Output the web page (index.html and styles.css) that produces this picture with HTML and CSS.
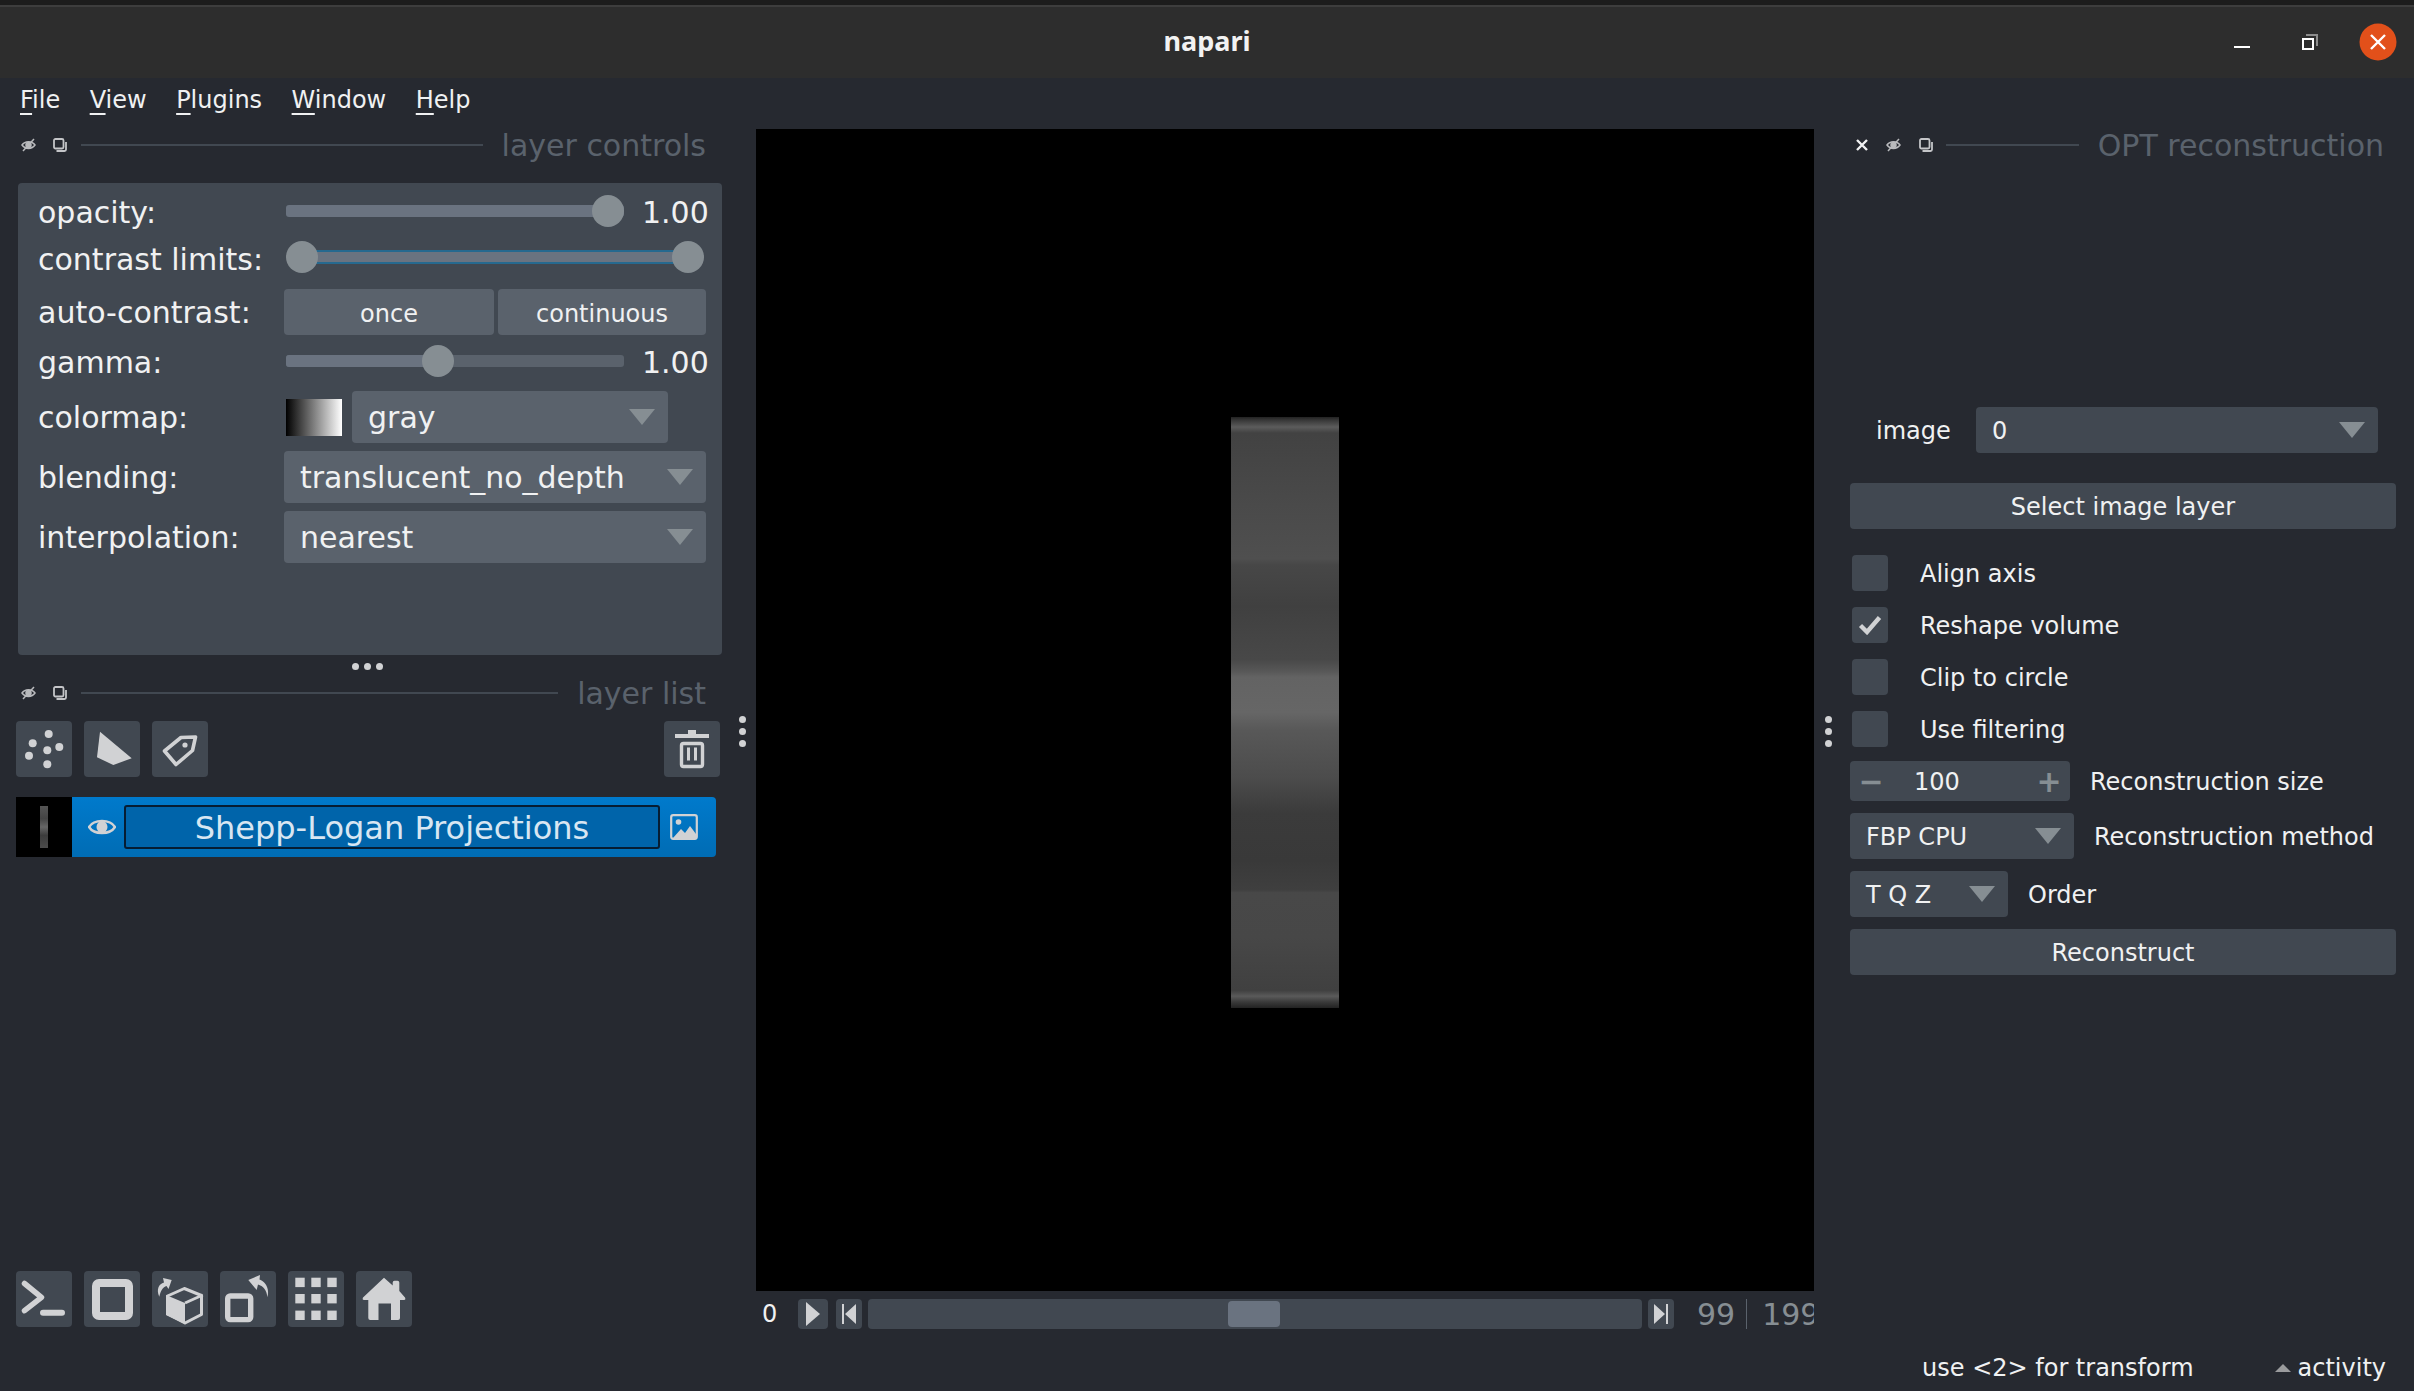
FILE: index.html
```html
<!DOCTYPE html>
<html lang="en">
<head>
  <meta charset="UTF-8">
  <title>napari</title>
  <link rel="stylesheet" href="styles.css">
</head>
<body>

  <!-- Window title bar -->
  <header class="titlebar">
    <span class="title-name">napari</span>
    <div class="win-buttons">
      <svg class="win-min" width="16" height="4" viewBox="0 0 16 4"><rect y="1" width="16" height="2" fill="#fff"/></svg>
      <svg class="win-max" width="16" height="16" viewBox="0 0 16 16"><path d="M4 1h11v11" fill="none" stroke="#8d8d8d" stroke-width="2"/><rect x="1" y="5" width="10" height="10" fill="#2d2d2d" stroke="#fff" stroke-width="2"/></svg>
      <svg class="win-close" width="38" height="38" viewBox="0 0 38 38"><circle cx="19" cy="19" r="18.5" fill="#e2501a"/><path d="M12 12l14 14M26 12L12 26" stroke="#fff" stroke-width="2.4"/></svg>
    </div>
  </header>

  <nav class="menubar">
    <span><u>F</u>ile</span>
    <span><u>V</u>iew</span>
    <span><u>P</u>lugins</span>
    <span><u>W</u>indow</span>
    <span><u>H</u>elp</span>
  </nav>

  <main class="main">

    <!-- Left dock -->
    <section class="left-dock">
      <div class="dock-head">
        <svg class="tiny-icon" width="15" height="14" viewBox="0 0 15 14"><use href="#eye-off"/></svg>
        <svg class="tiny-icon float-icon" width="14" height="14" viewBox="0 0 14 14"><use href="#float"/></svg>
        <div class="dock-line"></div>
        <span class="dock-title">layer controls</span>
      </div>

      <div class="controls-panel">
        <div class="ctl-row row-slider">
          <label>opacity:</label>
          <div class="slider"><div class="track"><div class="fill fill-full"></div></div><div class="knob knob-end"></div></div>
          <span class="ctl-value">1.00</span>
        </div>
        <div class="ctl-row row-slider row-contrast">
          <label>contrast limits:</label>
          <div class="slider slider-wide"><div class="range-track"></div><div class="knob knob-start"></div><div class="knob knob-end"></div></div>
        </div>
        <div class="ctl-row row-buttons">
          <label>auto-contrast:</label>
          <div class="btn-pair"><button class="btn-once">once</button><button class="btn-cont">continuous</button></div>
        </div>
        <div class="ctl-row row-slider">
          <label>gamma:</label>
          <div class="slider"><div class="track"><div class="fill" style="width:152px"></div></div><div class="knob" style="left:136px"></div></div>
          <span class="ctl-value">1.00</span>
        </div>
        <div class="ctl-row row-combo">
          <label>colormap:</label>
          <div class="cmap-thumb"></div>
          <div class="combo combo-cmap">gray</div>
        </div>
        <div class="ctl-row row-combo">
          <label>blending:</label>
          <div class="combo combo-full">translucent_no_depth</div>
        </div>
        <div class="ctl-row row-combo">
          <label>interpolation:</label>
          <div class="combo combo-full">nearest</div>
        </div>
      </div>

      <div class="splitter-h"><i></i><i></i><i></i></div>

      <div class="dock-head">
        <svg class="tiny-icon" width="15" height="14" viewBox="0 0 15 14"><use href="#eye-off"/></svg>
        <svg class="tiny-icon float-icon" width="14" height="14" viewBox="0 0 14 14"><use href="#float"/></svg>
        <div class="dock-line"></div>
        <span class="dock-title">layer list</span>
      </div>

      <div class="layer-buttons">
        <button class="icon-btn">
          <svg viewBox="0 0 56 56" fill="#d1d2d4"><circle cx="32.700" cy="13" r="4"/><circle cx="16.700" cy="22.300" r="4"/><circle cx="43.300" cy="26" r="4"/><circle cx="31.300" cy="29.300" r="4"/><circle cx="13" cy="34.700" r="4"/><circle cx="31.300" cy="43.300" r="4"/></svg>
        </button>
        <button class="icon-btn">
          <svg viewBox="0 0 56 56" fill="#d1d2d4"><path d="M16 10.700L47.700 37.300 29.300 44 13 36.300z"/></svg>
        </button>
        <button class="icon-btn">
          <svg viewBox="0 0 56 56"><path d="M43.500 16L29 16.500 12.500 30 24 43.500 40.500 29.500z" fill="none" stroke="#d1d2d4" stroke-width="3.600" stroke-linejoin="round"/><circle cx="33" cy="24" r="2.600" fill="#d1d2d4"/></svg>
        </button>
        <div class="btn-spacer"></div>
        <button class="icon-btn">
          <svg viewBox="0 0 56 56" fill="#d1d2d4"><path d="M11 13h34v4H11zM24 9h8v4h-8z"/><rect x="17.500" y="22.500" width="21" height="23" rx="2" fill="none" stroke="#d1d2d4" stroke-width="3.400"/><path d="M23 26.500h3v13h-3zM30 26.500h3v13h-3z"/></svg>
        </button>
      </div>

      <div class="layer-row">
        <div class="layer-thumb"><div class="layer-thumb-bar"></div></div>
        <div class="layer-item">
          <svg class="layer-eye" width="28" height="22" viewBox="0 0 28 22"><path d="M1 11C6 3 22 3 27 11 22 19 6 19 1 11z" fill="none" stroke="#d1d2d4" stroke-width="2.400"/><ellipse cx="14" cy="11" rx="5.500" ry="6" fill="#d1d2d4"/></svg>
          <div class="layer-name">Shepp-Logan Projections</div>
          <svg class="layer-type" width="28" height="26" viewBox="0 0 28 26"><rect x="1.200" y="1.200" width="25.600" height="23.600" rx="2" fill="none" stroke="#d1d2d4" stroke-width="2.200"/><circle cx="8.500" cy="8" r="2.800" fill="#d1d2d4"/><path d="M3 24l8-9 4 4 5-7 6 8v4z" fill="#d1d2d4"/></svg>
        </div>
      </div>

      <div class="dock-fill"></div>

      <div class="viewer-buttons">
        <button class="icon-btn">
          <svg viewBox="0 0 56 56" fill="none" stroke="#d1d2d4" stroke-linecap="round" stroke-linejoin="round"><path d="M8.500 12.500L25.500 26.300 8.500 39.700" stroke-width="5.500"/><path d="M27 41.800h19" stroke-width="6"/></svg>
        </button>
        <button class="icon-btn">
          <svg viewBox="0 0 56 56"><rect x="12" y="12" width="33" height="33" rx="3" fill="none" stroke="#d1d2d4" stroke-width="8"/></svg>
        </button>
        <button class="icon-btn">
          <svg viewBox="0 0 56 56"><path d="M32.300 17.500L49.500 24.500v19L33 52 15.500 43V25z" fill="none" stroke="#d1d2d4" stroke-width="3" stroke-linejoin="round"/><path d="M14 24l19 8v21L14 44z" fill="#d1d2d4"/><path d="M33 32l17.700-8" stroke="#d1d2d4" stroke-width="3"/><path d="M7.300 25.700C4 18 7 13 12 11.500L11 7 19.700 9 16.500 18 14.500 15C11 16 8.500 20 7.300 25.700z" fill="#d1d2d4"/></svg>
        </button>
        <button class="icon-btn">
          <svg viewBox="0 0 56 56"><rect x="7.700" y="25" width="23" height="23.600" rx="2.500" fill="none" stroke="#d1d2d4" stroke-width="5.400"/><path d="M47.300 26.300C47 19 43 15 38 13.500L36.700 19 28.300 9 40 4 39.500 8.500C45 10.500 50 17 47.300 26.300z" fill="#d1d2d4"/></svg>
        </button>
        <button class="icon-btn">
          <svg viewBox="0 0 56 56" fill="#d1d2d4"><rect x="7.300" y="6.700" width="9.400" height="9.400"/><rect x="23.300" y="6.700" width="9.400" height="9.400"/><rect x="39.300" y="6.700" width="9.400" height="9.400"/><rect x="7.300" y="23" width="9.400" height="9.400"/><rect x="23.300" y="23" width="9.400" height="9.400"/><rect x="39.300" y="23" width="9.400" height="9.400"/><rect x="7.300" y="39.600" width="9.400" height="9.400"/><rect x="23.300" y="39.600" width="9.400" height="9.400"/><rect x="39.300" y="39.600" width="9.400" height="9.400"/></svg>
        </button>
        <button class="icon-btn">
          <svg viewBox="0 0 56 56" fill="#d1d2d4"><path d="M28 6.700L36.700 14.500V11.500Q36.700 9.700 38.500 9.700H41.500Q43.300 9.700 43.300 11.500V20L49 26.500Q50 29 48 29H44V47Q44 49 42 49H35V32.500H22.500V49H14.300Q12.300 49 12.300 47V29H8Q6 29 7 26.500z"/></svg>
        </button>
      </div>
    </section>

    <div class="splitter-v"><i></i><i></i><i></i></div>

    <!-- Canvas and dims slider -->
    <section class="center">
      <div class="canvas"><div class="projection"></div></div>
      <div class="dims">
        <span class="dims-left">0</span>
        <button class="dim-btn dim-play"><svg width="14" height="24" viewBox="0 0 14 24"><path d="M0 0l14 12L0 24z" fill="#d1d2d4"/></svg></button>
        <button class="dim-btn dim-step"><svg width="14" height="20" viewBox="0 0 14 20"><path d="M0 0h2v20H0zM14 0v20L3 10z" fill="#d1d2d4"/></svg></button>
        <div class="dim-track"><div class="dim-handle"></div></div>
        <button class="dim-btn dim-step"><svg width="14" height="20" viewBox="0 0 14 20"><path d="M14 0h-2v20h2zM0 0v20l11-10z" fill="#d1d2d4"/></svg></button>
        <div class="dims-right"><span>99</span><i class="dims-sep"></i><span>199</span></div>
      </div>
    </section>

    <div class="splitter-v splitter-right"><i></i><i></i><i></i></div>

    <!-- Right dock -->
    <section class="right-dock">
      <div class="dock-head right-head">
        <svg class="tiny-icon" width="12" height="12" viewBox="0 0 12 12"><path d="M1 1l10 10M11 1L1 11" stroke="#f0f1f2" stroke-width="2.400"/></svg>
        <svg class="tiny-icon" width="15" height="14" viewBox="0 0 15 14"><use href="#eye-off"/></svg>
        <svg class="tiny-icon" width="14" height="14" viewBox="0 0 14 14"><use href="#float"/></svg>
        <div class="dock-line"></div>
        <span class="dock-title">OPT reconstruction</span>
      </div>

      <div class="image-row">
        <label>image</label>
        <div class="combo combo-small combo-image">0</div>
      </div>
      <button class="wide-btn select-btn">Select image layer</button>

      <div class="checks">
        <div class="check-row"><span class="checkbox"></span><label>Align axis</label></div>
        <div class="check-row"><span class="checkbox"><svg width="24" height="20" viewBox="0 0 24 20"><path d="M2.500 10.500l6.500 6.500L21.500 2.500" fill="none" stroke="#d1d2d4" stroke-width="4.400"/></svg></span><label>Reshape volume</label></div>
        <div class="check-row"><span class="checkbox"></span><label>Clip to circle</label></div>
        <div class="check-row"><span class="checkbox"></span><label>Use filtering</label></div>
      </div>

      <div class="form-row spin-row">
        <div class="spinbox"><span class="spin-sign">&minus;</span><span class="spin-value">100</span><span class="spin-sign">+</span></div>
        <label>Reconstruction size</label>
      </div>
      <div class="form-row">
        <div class="combo combo-small combo-method">FBP CPU</div>
        <label>Reconstruction method</label>
      </div>
      <div class="form-row">
        <div class="combo combo-small combo-order">T Q Z</div>
        <label>Order</label>
      </div>
      <button class="wide-btn">Reconstruct</button>
    </section>
  </main>

  <footer class="statusbar">
    <span class="status-hint">use &lt;2&gt; for transform</span>
    <span class="status-arrow"></span>
    <span>activity</span>
  </footer>

  <!-- Shared small icons -->
  <svg class="icon-defs" width="0" height="0">
    <defs>
      <g id="eye-off" fill="none" stroke="#b9babd" stroke-width="1.500"><path d="M1 7C4 2.500 11 2.500 14 7 11 11.500 4 11.500 1 7z"/><circle cx="7.500" cy="7" r="2.500" fill="#b9babd"/><path d="M2 13L13 1"/></g>
      <g id="float" fill="none" stroke="#c4c5c8" stroke-width="1.800"><rect x="1" y="1" width="9.500" height="9.500" rx="1.500"/><path d="M3.500 13h8q1.500 0 1.500-1.500V4"/></g>
    </defs>
  </svg>
</body>
</html>
```

FILE: styles.css
```css
/* Reset and base styles */
* { margin: 0; padding: 0; box-sizing: border-box; }
html, body { width: 2414px; height: 1391px; overflow: hidden; }
body {
  display: flex;
  flex-direction: column;
  background: #262930;
  color: #f0f1f2;
  font-family: "DejaVu Sans", sans-serif;
  font-size: 24px;
}
button { border: none; color: inherit; font: inherit; }
.icon-defs { position: absolute; }

/* Title bar */
.titlebar {
  position: relative;
  height: 78px;
  flex: none;
  display: flex;
  align-items: center;
  justify-content: center;
  padding-bottom: 2px;
  background: #2d2d2d;
  border-top: 5px solid #1c1c1c;
  box-shadow: inset 0 2px 0 #3d3d3d;
}
.title-name { font-family: "Noto Sans", sans-serif; font-weight: 700; font-size: 27px; color: #f2f2f2; }
.win-buttons { position: absolute; top: 0; right: 17px; height: 73px; display: flex; align-items: center; }
.win-min { margin-top: 10px; margin-right: 52px; }
.win-max { margin-right: 41px; }

/* Menu */
.menubar { height: 51px; flex: none; display: flex; gap: 29.5px; padding: 6px 0 0 20px; }
.menubar span { line-height: 32px; height: 32px; }
.menubar u { text-underline-offset: 5px; text-decoration-thickness: 2px; }

/* Main layout */
.main { flex: 1; min-height: 0; display: flex; }
.left-dock { width: 732px; flex: none; display: flex; flex-direction: column; }
.center { width: 1058px; margin-left: 4px; flex: none; display: flex; flex-direction: column; }
.right-dock { flex: 1; display: flex; flex-direction: column; padding: 0 18px 0 8px; }

/* Dock headers */
.dock-head { height: 32px; flex: none; display: flex; align-items: center; padding: 0 26px 0 21px; }
.tiny-icon { flex: none; }
.float-icon { margin-left: 17px; }
.dock-line { flex: 1; height: 2px; background: #414851; margin: 0 19px 0 14px; }
.dock-title { padding-top: 2px; font-size: 30px; color: #5a626c; line-height: 32px; white-space: nowrap; }
.right-head { padding: 0 12px 0 6px; gap: 18px; }
.right-head .dock-line { margin: 0 1px 0 -5px; }

/* Layer controls */
.controls-panel {
  width: 704px;
  height: 472px;
  margin: 22px 0 0 18px;
  padding: 12px 16px 0 20px;
  background: #414851;
  border-radius: 4px;
  font-size: 30px;
}
.ctl-row { display: flex; align-items: center; }
.ctl-row label { width: 246px; flex: none; }
.row-slider { height: 32px; margin-bottom: 14px; }
.row-slider label { padding-top: 2px; }
.row-contrast { margin-bottom: 16px; }
.row-contrast label { padding-top: 5px; }
.row-buttons { height: 46px; margin-bottom: 10px; }
.row-combo { height: 52px; margin-bottom: 8px; }

.slider { position: relative; width: 338px; height: 32px; margin-left: 2px; flex: none; }
.slider-wide { width: 418px; }
.track { position: absolute; left: 0; right: 0; top: 10px; height: 12px; background: #5a626c; border-radius: 3px; overflow: hidden; }
.fill { height: 100%; background: #6a7380; }
.fill-full { width: 100%; }
.range-track {
  position: absolute; left: 16px; right: 16px; top: 9px; height: 14px;
  background: #6a7380;
  border-top: 2px solid #26698f;
  border-bottom: 2px solid #26698f;
}
.knob { position: absolute; top: 0; width: 32px; height: 32px; border-radius: 50%; background: #868e93; }
.knob-start { left: 0; }
.knob-end { right: 0; }
.ctl-value { margin-left: 18px; padding-top: 2px; }

.btn-pair { display: flex; gap: 4px; font-size: 24px; }
.btn-pair button { height: 46px; padding-top: 3px; background: #5a626c; border-radius: 4px; }
.btn-once { width: 210px; }
.btn-cont { width: 208px; }

.cmap-thumb { width: 56px; height: 37px; margin-left: 2px; flex: none; background: linear-gradient(90deg, #000, #fff); }

.combo {
  position: relative;
  display: flex;
  align-items: center;
  height: 52px;
  padding-left: 16px;
  background: #5a626c;
  border-radius: 4px;
}
.combo::after {
  content: "";
  position: absolute;
  right: 13px;
  top: 18px;
  border-left: 13px solid transparent;
  border-right: 13px solid transparent;
  border-top: 16px solid #868e93;
}
.combo-full { width: 422px; }
.combo-cmap { width: 316px; margin-left: 10px; }

.splitter-h { height: 22px; flex: none; display: flex; align-items: center; justify-content: center; gap: 5px; padding-left: 2px; }
.splitter-h i, .splitter-v i { display: block; width: 7px; height: 7px; border-radius: 50%; background: #d1d2d4; }

/* Layer list */
.layer-buttons { display: flex; gap: 12px; padding: 0 12px 0 16px; margin-top: 12px; flex: none; }
.btn-spacer { flex: 1; }
.icon-btn { width: 56px; height: 56px; flex: none; display: block; background: #414851; border-radius: 4px; }
.icon-btn svg { display: block; width: 56px; height: 56px; }

.layer-row { display: flex; height: 60px; margin: 20px 16px 0 16px; flex: none; }
.layer-thumb { width: 56px; flex: none; background: #000; display: flex; align-items: center; justify-content: center; }
.layer-thumb-bar { width: 8px; height: 42px; background: linear-gradient(180deg, #555, #444 30%, #666 50%, #3c3c3c 70%, #4c4c4c); }
.layer-item {
  flex: 1;
  display: flex;
  align-items: center;
  padding: 0 18px 0 16px;
  background: linear-gradient(180deg, #007acc, #006cb4);
  border-radius: 0 4px 4px 0;
}
.layer-eye { flex: none; }
.layer-name {
  width: 536px;
  height: 44px;
  margin: 0 10px 0 8px;
  flex: none;
  text-align: center;
  font-size: 32px;
  line-height: 42px;
  color: #d8e6f2;
  background: #0064aa;
  border: 2px solid #061d33;
  border-radius: 3px;
}
.layer-type { flex: none; }

.dock-fill { flex: 1; }
.viewer-buttons { display: flex; gap: 12px; padding: 0 0 18px 16px; flex: none; }

/* Splitters */
.splitter-v { width: 20px; flex: none; display: flex; flex-direction: column; align-items: center; justify-content: flex-start; gap: 5px; padding-top: 587px; }
.splitter-right { width: 28px; }

/* Canvas */
.canvas { height: 1162px; flex: none; background: #000; display: flex; justify-content: center; padding-top: 288px; }
.projection {
  width: 108px;
  height: 591px;
  background: linear-gradient(180deg,
    #222 0%, #3a3a3a 0.6%, #5c5c5c 1.7%, #424242 2.7%, #4a4a4a 15%, #4f4f4f 24%, #474747 25%,
    #404040 32%, #484848 41%, #575757 43%, #636363 44%, #666 50%, #585858 53%, #4c4c4c 61%,
    #3b3b3b 67%, #393939 75%, #3f3f3f 80%, #484848 80.5%, #474747 88%, #404040 97%,
    #5a5a5a 98%, #3a3a3a 99%, #222 100%);
}

/* Dims slider */
.dims { height: 30px; margin-top: 8px; flex: none; display: flex; align-items: center; overflow: hidden; }
.dims-left { width: 42px; padding-left: 6px; flex: none; }
.dim-btn { height: 30px; flex: none; display: flex; align-items: center; justify-content: center; background: #414851; border-radius: 4px; }
.dim-play { width: 30px; margin-right: 8px; }
.dim-step { width: 26px; }
.dim-track { flex: 1; height: 30px; margin: 0 6px; padding: 2px 0 2px 360px; background: #414851; border-radius: 4px; }
.dim-handle { width: 52px; height: 26px; background: #6a7380; border-radius: 4px; }
.dims-right { width: 117px; margin-left: 23px; flex: none; display: flex; align-items: center; overflow: hidden; white-space: nowrap; font-size: 30px; color: #868e93; }
.dims-sep { width: 1px; height: 30px; flex: none; margin: 0 15px 0 11px; background: #5a626c; }

/* Right dock widgets */
.right-dock label { white-space: nowrap; padding-top: 2px; }
.image-row { display: flex; align-items: center; margin-top: 246px; padding-left: 26px; }
.image-row label { width: 100px; flex: none; }
.combo-small { height: 46px; padding-top: 2px; background: #414851; }
.combo-small::after { top: 15px; }
.combo-image { width: 402px; }
.wide-btn { width: 546px; height: 46px; flex: none; padding-top: 2px; background: #414851; border-radius: 4px; }
.select-btn { margin-top: 30px; }

.checks { display: flex; flex-direction: column; gap: 16px; margin-top: 26px; padding-left: 2px; }
.check-row { height: 36px; display: flex; align-items: center; }
.checkbox { width: 36px; height: 36px; margin-right: 32px; flex: none; display: flex; align-items: center; justify-content: center; background: #414851; border-radius: 4px; }

.form-row { display: flex; align-items: center; gap: 20px; margin-bottom: 12px; }
.spin-row { margin-top: 14px; }
.spinbox { width: 220px; height: 40px; padding: 2px 8px 0; flex: none; display: flex; align-items: center; background: #414851; border-radius: 4px; }
.spin-sign { width: 26px; text-align: center; font-size: 30px; font-weight: 700; line-height: 30px; color: #868e93; }
.spin-value { flex: 1; padding-left: 30px; }
.combo-method { width: 224px; }
.combo-order { width: 158px; }
.form-row .combo { flex: none; }

/* Status bar */
.statusbar { height: 46px; flex: none; display: flex; align-items: center; justify-content: flex-end; padding-right: 28px; }
.status-hint { margin-right: 81px; }
.status-arrow {
  width: 0; height: 0; margin-right: 7px;
  border-left: 8px solid transparent;
  border-right: 8px solid transparent;
  border-bottom: 8px solid #9a9b9d;
}
```
